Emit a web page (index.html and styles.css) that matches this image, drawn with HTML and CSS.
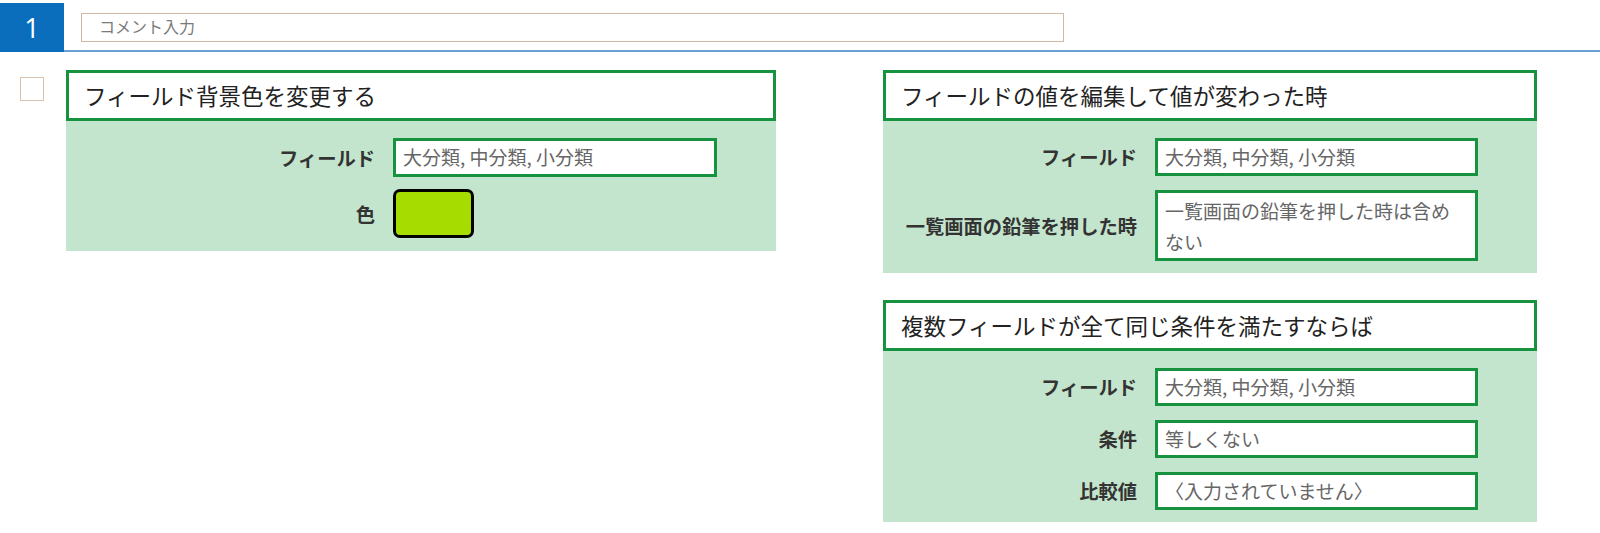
FILE: index.html
```html
<!DOCTYPE html>
<html lang="ja">
<head>
<meta charset="utf-8">
<link rel="stylesheet" href="styles.css">
</head>
<body>
<div class="topbar">
  <div class="num">1</div>
  <div class="top-right">
    <div class="comment">コメント入力</div>
  </div>
</div>
<div class="main">
  <div class="left-col">
    <div class="checkbox"></div>
    <div class="panel panel-left">
      <div class="panel-head">フィールド背景色を変更する</div>
      <div class="panel-body grid-a">
        <div class="label">フィールド</div>
        <div class="input">大分類, 中分類, 小分類</div>
        <div class="label">色</div>
        <div class="swatch-cell"><div class="swatch"></div></div>
      </div>
    </div>
  </div>
  <div class="right-col">
    <div class="panel panel-right">
      <div class="panel-head">フィールドの値を編集して値が変わった時</div>
      <div class="panel-body grid-b">
        <div class="label">フィールド</div>
        <div class="input">大分類, 中分類, 小分類</div>
        <div class="label">一覧画面の鉛筆を押した時</div>
        <div class="input multi">一覧画面の鉛筆を押した時は含めない</div>
      </div>
    </div>
    <div class="panel panel-right">
      <div class="panel-head">複数フィールドが全て同じ条件を満たすならば</div>
      <div class="panel-body grid-b">
        <div class="label">フィールド</div>
        <div class="input">大分類, 中分類, 小分類</div>
        <div class="label">条件</div>
        <div class="input">等しくない</div>
        <div class="label">比較値</div>
        <div class="input">〈入力されていません〉</div>
      </div>
    </div>
  </div>
</div>
</body>
</html>
```
FILE: styles.css
```css
html, body {
  margin: 0;
  padding: 0;
  background: #ffffff;
  font-family: "Noto Sans CJK JP", "Noto Sans", sans-serif;
}

.topbar {
  display: flex;
  align-items: flex-start;
}

.num {
  width: 64px;
  height: 49px;
  margin-top: 3px;
  background: #0a6ebd;
  color: #ffffff;
  font-family: "Open Sans", "Noto Sans", sans-serif;
  font-size: 27px;
  line-height: 50px;
  text-align: center;
}

.top-right {
  flex: 1;
  border-bottom: 2px solid #6a9fd6;
  box-sizing: border-box;
  height: 52px;
  padding: 13px 0 0 17px;
}

.comment {
  width: 983px;
  height: 29px;
  box-sizing: border-box;
  border: 1.5px solid #cdb9a6;
  padding-left: 17px;
  font-size: 16px;
  line-height: 25px;
  color: #7a7a7a;
}

.main {
  display: flex;
  padding-top: 18px;
}

.left-col {
  display: flex;
  align-items: flex-start;
  padding-left: 20px;
  width: 756px;
}

.checkbox {
  width: 24px;
  height: 24px;
  box-sizing: border-box;
  border: 1.5px solid #d6c2ad;
  margin-top: 7px;
  margin-right: 22px;
}

.right-col {
  margin-left: 107px;
  display: flex;
  flex-direction: column;
  gap: 27px;
}

.panel-left { width: 710px; }
.panel-right { width: 654px; }

.panel-head {
  height: 51px;
  box-sizing: border-box;
  border: 3px solid #17933f;
  background: #ffffff;
  padding-left: 15px;
  font-size: 22.5px;
  line-height: 44px;
  color: #222222;
  white-space: nowrap;
}

.panel-body {
  background: #c4e5cd;
  display: grid;
  column-gap: 18px;
  align-items: center;
}

.grid-a {
  grid-template-columns: 309px 324px;
  row-gap: 12px;
  padding: 17px 0 13px;
}

.grid-b {
  grid-template-columns: 254px 323px;
  row-gap: 14px;
  padding: 17px 0 12px;
}

.label {
  text-align: right;
  font-weight: bold;
  font-size: 19.3px;
  color: #333333;
  white-space: nowrap;
}

.input {
  height: 38px;
  box-sizing: border-box;
  border: 3px solid #17933f;
  background: #ffffff;
  padding: 0 6px 0 7px;
  font-size: 19px;
  line-height: 31px;
  color: #666666;
  white-space: nowrap;
  overflow: hidden;
}

.grid-a .input { height: 39px; }

.input.multi {
  height: 71px;
  white-space: normal;
  line-height: 31px;
  padding: 2px 15px 0 7px;
}

.swatch {
  width: 81px;
  height: 49px;
  box-sizing: border-box;
  border: 3px solid #000000;
  border-radius: 7px;
  background: #a6dc00;
}
```
